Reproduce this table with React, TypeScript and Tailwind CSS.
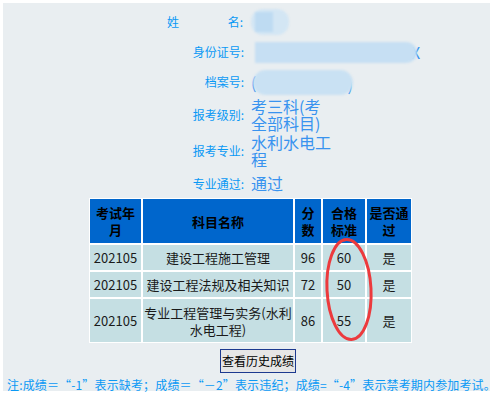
import React from "react";

const font = { fontFamily: '"Noto Sans CJK SC", "Liberation Sans", sans-serif' };

type Score = {
  month: string;
  subject: React.ReactNode;
  score: string;
  pass: string;
  ok: string;
};

const scores: Score[] = [
  { month: "202105", subject: "建设工程施工管理", score: "96", pass: "60", ok: "是" },
  { month: "202105", subject: "建设工程法规及相关知识", score: "72", pass: "50", ok: "是" },
  {
    month: "202105",
    subject: (
      <>
        专业工程管理与实务(水利
        <br />
        水电工程)
      </>
    ),
    score: "86",
    pass: "55",
    ok: "是",
  },
];

function InfoRow({
  label,
  children,
  h,
}: {
  label: React.ReactNode;
  children: React.ReactNode;
  h: string;
}) {
  return (
    <div className={`flex items-center ${h}`}>
      <div className="flex w-[241px] justify-end text-[12px] leading-[16px] text-[#0a99f5]">{label}</div>
      <div className="ml-[7px] w-[82px] text-[16px] leading-[17px] text-[#3893ef]">{children}</div>
    </div>
  );
}

export default function App() {
  const head = "flex items-center justify-center bg-[#0066cc] text-center text-[13px] font-bold leading-[17px] text-black";
  const cell = "flex items-center justify-center bg-[#c5dfe3] text-center text-[13px] leading-[17px] text-[#1a1a1a]";

  return (
    <div className="h-[395px] w-[496px] bg-white pt-[3px] pl-[3px] pr-[6px] pb-[4px]" style={font}>
      <div className="h-full bg-[#e9eef1] pt-[4px]">
        <InfoRow
          h="h-[30px]"
          label={
            <span className="mr-[1px] flex w-[76px] justify-between">
              <span>姓</span>
              <span>名:</span>
            </span>
          }
        >
          <div className="flex">
            <div className="h-[26px] w-[38px] shrink-0 rounded-[12px] bg-[#d3e6f4] blur-[1px]">
              <div className="ml-[4px] mt-[3px] h-[20px] w-[18px] bg-[#bedbf2]" />
            </div>
          </div>
        </InfoRow>
        <InfoRow h="h-[30px]" label="身份证号:">
          <div className="flex items-center whitespace-nowrap">
            <div className="relative z-10 -mr-[6px] ml-[4px] h-[21px] w-[162px] shrink-0 rounded-r-full bg-[#c6dff3] blur-[1px]" />
            <span className="shrink-0">X</span>
          </div>
        </InfoRow>
        <InfoRow h="h-[30px]" label="档案号:">
          <div className="flex items-center whitespace-nowrap">
            <span className="-mr-[3px] shrink-0">(</span>
            <div className="relative z-10 h-[25px] w-[100px] shrink-0 rounded-full bg-[#c9e1f3] blur-[1px]" />
            <span className="-ml-[6px] mt-[4px] shrink-0">)</span>
          </div>
        </InfoRow>
        <InfoRow h="h-[36px]" label="报考级别:">
          考三科(考全部科目)
        </InfoRow>
        <InfoRow h="h-[36px]" label="报考专业:">
          水利水电工程
        </InfoRow>
        <InfoRow h="h-[29px]" label="专业通过:">
          通过
        </InfoRow>

        <div className="relative ml-[86px] w-[323px]">
          <div className="grid grid-cols-[51px_150px_26px_42px_44px] grid-rows-[44px_25px_25px_43px] gap-[2px] bg-white p-px">
            <div className={head}>
              考试年
              <br />
              月
            </div>
            <div className={head}>科目名称</div>
            <div className={head}>
              分
              <br />
              数
            </div>
            <div className={head}>
              合格
              <br />
              标准
            </div>
            <div className={head}>
              是否通
              <br />
              过
            </div>
            {scores.map((s, i) => (
              <React.Fragment key={i}>
                <div className={cell}>{s.month}</div>
                <div className={cell}>{s.subject}</div>
                <div className={cell}>{s.score}</div>
                <div className={cell}>{s.pass}</div>
                <div className={cell}>{s.ok}</div>
              </React.Fragment>
            ))}
          </div>
          <svg className="absolute left-[230px] top-[36px]" width="60" height="112" viewBox="0 0 60 112">
            <ellipse
              cx="30"
              cy="55.5"
              rx="22"
              ry="50"
              fill="none"
              stroke="#ec3a3d"
              strokeWidth="3"
              transform="rotate(-3 30 55.5)"
            />
          </svg>
        </div>

        <div className="mt-[4px] pl-[217px]">
          <button className="h-[24px] w-[76px] border border-[#1d3a8f] bg-[#e6e6e6] px-0 text-[12px] leading-[16px] text-black">
            查看历史成绩
          </button>
        </div>

        <p className="mt-[4px] whitespace-nowrap pl-[4px] text-[12px] leading-[15px] tracking-[0.15px] text-[#0a99f5]">
          注:成绩＝“-1”表示缺考；成绩＝“－2”表示违纪；成绩=“-4”表示禁考期内参加考试。
        </p>
      </div>
    </div>
  );
}
